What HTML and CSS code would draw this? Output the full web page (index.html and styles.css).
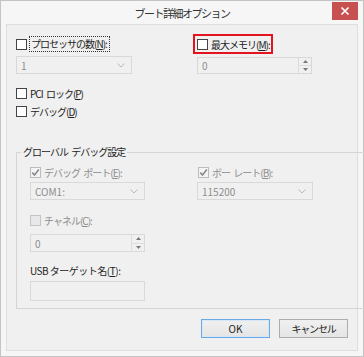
FILE: index.html
```html
<!DOCTYPE html>
<html lang="ja">
<head>
    <meta charset="UTF-8">
    <meta name="viewport" content="width=device-width, initial-scale=1.0">
    <title>ブート詳細オプション</title>
    <link rel="stylesheet" href="styles.css">
</head>
<body>
    <div class="window">
        <div class="titlebar">
            <span class="title">ブート詳細オプション</span>
            <span class="caption-btn">
                <svg width="26" height="18" viewBox="0 0 26 18">
                    <rect x="0" y="0" width="26" height="18" fill="#c75050"/>
                    <path d="M9.5 5.5 L16.5 12.5 M16.5 5.5 L9.5 12.5" stroke="#ffffff" stroke-width="1.7"/>
                </svg>
            </span>
        </div>

        <div class="content">
            <div class="top">
                <div class="col-left">
                    <div class="check first">
                        <span class="box"></span>
                        <span class="focus">プロセッサの数(<u>N</u>):</span>
                    </div>
                    <div class="combo disabled">
                        <span class="value-text">1</span>
                        <svg class="chev" width="8" height="5" viewBox="0 0 8 5"><path d="M0.5 0.5 L4 4 L7.5 0.5" fill="none" stroke="#b8b8b8"/></svg>
                    </div>
                    <div class="check pci">
                        <span class="box"></span>
                        <span>PCI ロック(<u>P</u>)</span>
                    </div>
                    <div class="check">
                        <span class="box"></span>
                        <span>デバッグ(<u>D</u>)</span>
                    </div>
                </div>
                <div class="col-right">
                    <div class="highlight">
                        <div class="check">
                            <span class="box"></span>
                            <span>最大メモリ(<u>M</u>):</span>
                        </div>
                    </div>
                    <div class="spin disabled mem">
                        <span class="value">0</span>
                        <span class="arrows">
                            <span><svg width="5" height="3" viewBox="0 0 5 3"><path d="M0 3 L2.5 0 L5 3Z" fill="#777"/></svg></span>
                            <span><svg width="5" height="3" viewBox="0 0 5 3"><path d="M0 0 L2.5 3 L5 0Z" fill="#777"/></svg></span>
                        </span>
                    </div>
                </div>
            </div>

            <fieldset class="group">
                <legend>グローバル デバッグ設定</legend>
                <div class="group-body">
                    <div class="group-col">
                        <div class="check disabled">
                            <span class="box checked">
                                <svg width="9" height="9" viewBox="0 0 9 9"><path d="M1.2 4.6 L3.5 7 L7.8 1.5" fill="none" stroke="#8a8a8a" stroke-width="1.6"/></svg>
                            </span>
                            <span>デバッグ ポート(<u>E</u>):</span>
                        </div>
                        <div class="combo disabled wide">
                            <span class="value-text">COM1:</span>
                            <svg class="chev" width="8" height="5" viewBox="0 0 8 5"><path d="M0.5 0.5 L4 4 L7.5 0.5" fill="none" stroke="#b8b8b8"/></svg>
                        </div>
                        <div class="check disabled channel">
                            <span class="box off"></span>
                            <span>チャネル(<u>C</u>):</span>
                        </div>
                        <div class="spin disabled channel-spin">
                            <span class="value">0</span>
                            <span class="arrows">
                                <span><svg width="5" height="3" viewBox="0 0 5 3"><path d="M0 3 L2.5 0 L5 3Z" fill="#777"/></svg></span>
                                <span><svg width="5" height="3" viewBox="0 0 5 3"><path d="M0 0 L2.5 3 L5 0Z" fill="#777"/></svg></span>
                            </span>
                        </div>
                        <div class="label usb">USB ターゲット名(<u>T</u>):</div>
                        <div class="textbox"></div>
                    </div>
                    <div class="group-col right">
                        <div class="check disabled">
                            <span class="box checked">
                                <svg width="9" height="9" viewBox="0 0 9 9"><path d="M1.2 4.6 L3.5 7 L7.8 1.5" fill="none" stroke="#8a8a8a" stroke-width="1.6"/></svg>
                            </span>
                            <span>ボー レート(<u>B</u>):</span>
                        </div>
                        <div class="combo disabled wide baud">
                            <span class="value-text">115200</span>
                            <svg class="chev" width="8" height="5" viewBox="0 0 8 5"><path d="M0.5 0.5 L4 4 L7.5 0.5" fill="none" stroke="#b8b8b8"/></svg>
                        </div>
                    </div>
                </div>
            </fieldset>

            <div class="buttons">
                <button class="btn default">OK</button>
                <button class="btn">キャンセル</button>
            </div>
        </div>
    </div>
</body>
</html>
```

FILE: styles.css
```css
* {
    box-sizing: border-box;
}
body {
    margin: 0;
    font-family: "Noto Sans CJK JP", sans-serif;
    font-size: 10px;
    letter-spacing: -1px;
    word-spacing: 2px;
    color: #1e1e1e;
}
.window {
    position: relative;
    width: 364px;
    height: 357px;
    background: #f6f6f6;
    border: 1px solid #c4c4c4;
    display: flex;
    flex-direction: column;
}
.titlebar {
    height: 23px;
    text-align: center;
}
.title {
    font-size: 11px;
    letter-spacing: -1.5px;
    line-height: 24px;
    color: #333;
}
/* window control sits over the title bar */
.caption-btn {
    position: absolute;
    top: 1px;
    right: 5px;
    z-index: 2;
    width: 26px;
    height: 18px;
    line-height: 0;
}
.content {
    margin: 0 5px;
    height: 327px;
    background: #f0f0f0;
    border: 1px solid #dedede;
    padding: 9px 0 0 9px;
}
.top {
    display: flex;
}
.col-left {
    width: 177px;
}
.check {
    display: flex;
    align-items: center;
    gap: 3px;
    height: 18px;
    white-space: nowrap;
}
.check.first {
    height: 20px;
}
.box {
    width: 11px;
    height: 11px;
    border: 1px solid #444;
    background: #fff;
    display: flex;
    align-items: center;
    justify-content: center;
    flex: none;
}
.box.checked {
    border-color: #bcbcbc;
    background: #f4f4f4;
}
.box.off {
    border-color: #c4c4c4;
    background: #e8e8e8;
}
.focus {
    outline: 1px dotted #333;
    padding: 1px 2px 1px 1px;
    line-height: 12px;
}
.disabled {
    color: #8d8d8d;
}
.value-text,
.spin .value {
    letter-spacing: 0;
}
.combo {
    margin-top: 2px;
    width: 116px;
    height: 18px;
    border: 1px solid #d9d9d9;
    display: flex;
    align-items: center;
    justify-content: space-between;
    padding: 0 6px 0 4px;
}
.combo.wide {
    margin-top: 1px;
    width: 115px;
}
.combo.baud {
    width: 116px;
}
.pci {
    margin-top: 10px;
}
.highlight {
    width: 80px;
    height: 20px;
    border: 2px solid #e3141f;
    padding-left: 2px;
    display: flex;
    align-items: center;
}
.spin {
    width: 115px;
    height: 18px;
    border: 1px solid #d9d9d9;
    display: flex;
    align-items: stretch;
}
.spin.mem {
    margin: 3px 0 0 4px;
    height: 17px;
}
.spin .value {
    flex: 1;
    padding-left: 4px;
    display: flex;
    align-items: center;
}
.arrows {
    width: 13px;
    display: flex;
    flex-direction: column;
    border-left: 1px solid #dcdcdc;
}
.arrows span {
    flex: 1;
    display: flex;
    align-items: center;
    justify-content: center;
}
.arrows span + span {
    border-top: 1px solid #dcdcdc;
}
.group {
    margin: 25px 0 0 0;
    width: 332px;
    padding: 0;
    border: 1px solid #d5d5d5;
}
.group legend {
    margin-left: 4px;
    padding: 0 2px;
    line-height: 14px;
}
.group-body {
    display: flex;
    padding: 4px 0 7px 13px;
}
.group-col {
    width: 167px;
}
.group-col.right .check {
    margin-left: 1px;
}
.channel {
    margin-top: 11px;
}
.channel-spin {
    margin-top: 5px;
}
.label.usb {
    margin-top: 9px;
    height: 18px;
    display: flex;
    align-items: center;
    white-space: nowrap;
    letter-spacing: -0.5px;
    word-spacing: 0;
}
.textbox {
    margin-top: 2px;
    width: 115px;
    height: 20px;
    border: 1px solid #d9d9d9;
}
.buttons {
    width: 332px;
    margin-top: 10px;
    display: flex;
    justify-content: flex-end;
    gap: 9px;
}
.btn {
    width: 69px;
    height: 19px;
    padding: 0;
    font-family: inherit;
    font-size: 10px;
    letter-spacing: -1.2px;
    color: #1e1e1e;
    background: linear-gradient(#f0f0f0, #e5e5e5);
    border: 1px solid #adadad;
}
.btn.default {
    letter-spacing: 0;
    border-color: #6aa8e6;
    box-shadow: inset 0 0 0 1px #d6e8f8;
}
```
